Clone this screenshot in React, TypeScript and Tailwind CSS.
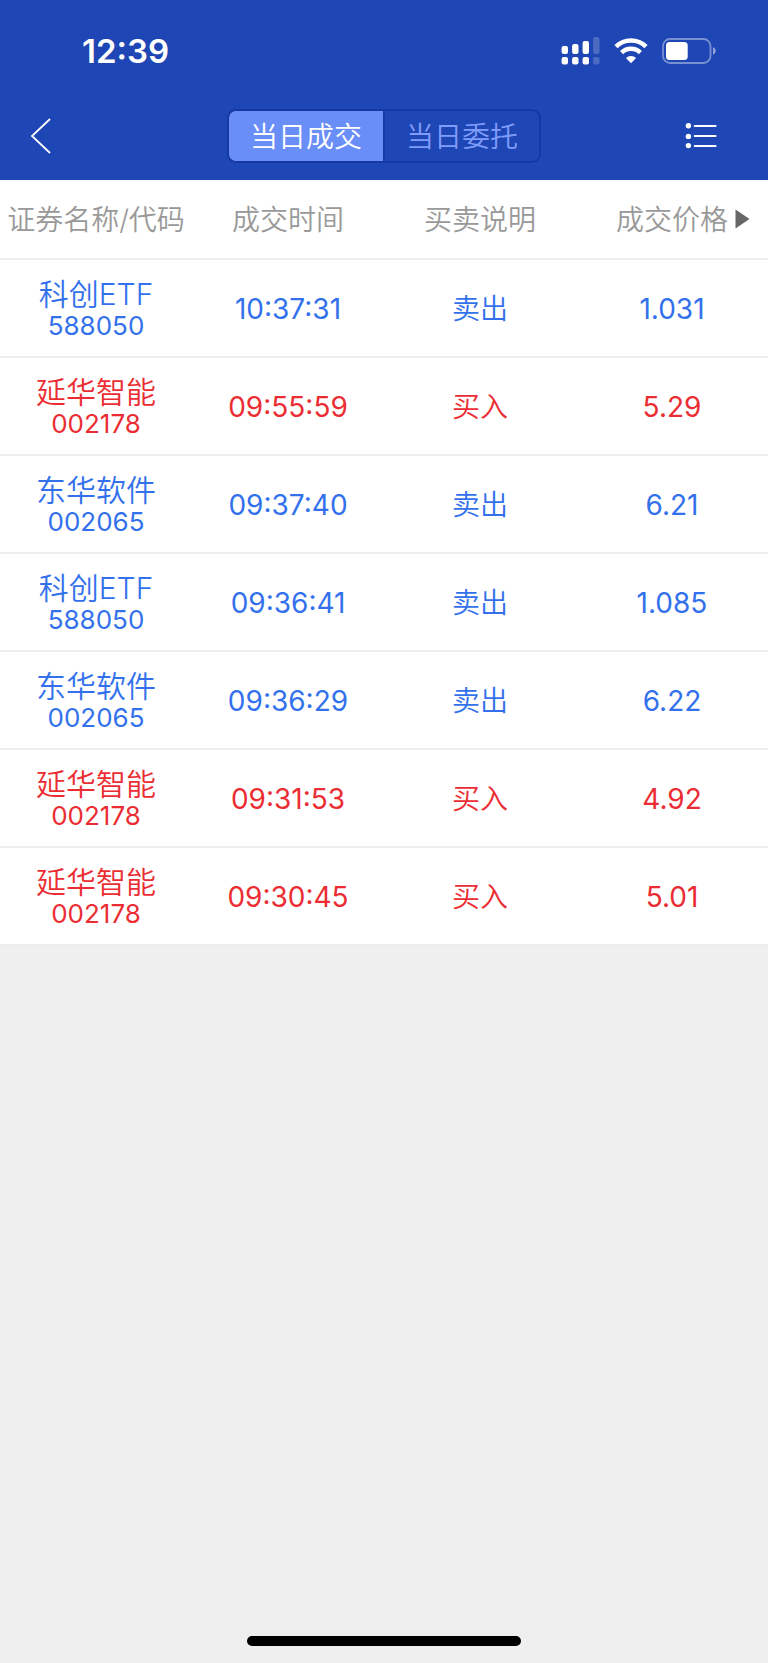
import { useState } from "react";
import clsx from "clsx";

type Side = "buy" | "sell";

interface Trade {
  name: string;
  code: string;
  time: string;
  side: Side;
  price: string;
}

const TRADES: Trade[] = [
  { name: "科创ETF", code: "588050", time: "10:37:31", side: "sell", price: "1.031" },
  { name: "延华智能", code: "002178", time: "09:55:59", side: "buy", price: "5.29" },
  { name: "东华软件", code: "002065", time: "09:37:40", side: "sell", price: "6.21" },
  { name: "科创ETF", code: "588050", time: "09:36:41", side: "sell", price: "1.085" },
  { name: "东华软件", code: "002065", time: "09:36:29", side: "sell", price: "6.22" },
  { name: "延华智能", code: "002178", time: "09:31:53", side: "buy", price: "4.92" },
  { name: "延华智能", code: "002178", time: "09:30:45", side: "buy", price: "5.01" },
];

const SIDE_LABEL: Record<Side, string> = { buy: "买入", sell: "卖出" };

const TABS = ["当日成交", "当日委托"];

function SignalIcon() {
  const tops = [9, 7, 4, 0];
  return (
    <svg width="39" height="28" viewBox="0 0 39 28" fill="white">
      {tops.map((top, i) => (
        <g key={i} opacity={i === 3 ? 0.2 : 1}>
          <rect x={0.6 + i * 10.5} y={top} width="6.4" height={17 - top} rx="2" />
          <rect x={0.6 + i * 10.5} y="20" width="6.4" height="7.6" rx="2" />
        </g>
      ))}
    </svg>
  );
}

function WifiIcon() {
  return (
    <svg width="34" height="26" viewBox="0 0 34 26" fill="none">
      <path d="M2 8.6A21.5 21.5 0 0 1 32 8.6" stroke="white" strokeWidth="4.6" />
      <path d="M7.6 14.6A13.4 13.4 0 0 1 26.4 14.6" stroke="white" strokeWidth="4.4" />
      <path d="M17 25.2L11.9 20A7.3 7.3 0 0 1 22.1 20Z" fill="white" />
    </svg>
  );
}

function BatteryIcon() {
  return (
    <svg width="54" height="26" viewBox="0 0 54 26" fill="none">
      <rect x="1" y="1" width="47.5" height="24" rx="7" stroke="white" strokeOpacity="0.4" strokeWidth="1.8" />
      <rect x="4" y="4" width="21.7" height="18" rx="3.5" fill="white" />
      <path d="M51 9.2a4 4 0 0 1 0 7.6Z" fill="white" fillOpacity="0.5" />
    </svg>
  );
}

function StatusBar() {
  return (
    <div className="flex h-24 items-center justify-between pr-[52px] pl-[82px] pt-1.5">
      <span className="text-[33px] leading-10 font-semibold">12:39</span>
      <div className="flex items-center gap-3.5">
        <SignalIcon />
        <WifiIcon />
        <BatteryIcon />
      </div>
    </div>
  );
}

function NavBar() {
  const [active, setActive] = useState(0);

  return (
    <div className="grid h-21 grid-cols-[1fr_auto_1fr] items-center pb-1">
      <button type="button" aria-label="返回" className="justify-self-start pl-[30px]">
        <svg width="22" height="38" viewBox="0 0 22 38" fill="none">
          <path d="M20 2L2 19L20 36" stroke="white" strokeWidth="1.8" />
        </svg>
      </button>

      <div className="flex h-[54px] w-[314px] overflow-hidden rounded-[9px] border-2 border-[#1538a2]">
        {TABS.map((tab, i) => (
          <button
            key={tab}
            type="button"
            aria-pressed={active === i}
            onClick={() => setActive(i)}
            className={clsx(
              "flex-1 pt-0.5 text-[28px] leading-10 font-[350]",
              i > 0 && "border-l-2 border-[#1538a2]",
              active === i ? "bg-[#698ef7] text-white" : "text-[#809cfb]",
            )}
          >
            {tab}
          </button>
        ))}
      </div>

      <button type="button" aria-label="菜单" className="justify-self-end pr-[50px]">
        <svg width="34" height="28" viewBox="0 0 34 28" fill="none">
          <g fill="white">
            <circle cx="4.4" cy="3.8" r="2.7" />
            <circle cx="4.4" cy="14.4" r="2.7" />
            <circle cx="4.4" cy="23.6" r="2.7" />
          </g>
          <path d="M10.8 4H31.5M10.8 14H31.5M10.8 24H31.5" stroke="white" strokeWidth="2.2" strokeLinecap="round" />
        </svg>
      </button>
    </div>
  );
}

function TradeRow({ trade }: { trade: Trade }) {
  return (
    <tr
      className={clsx(
        "h-[98px] border-b-2 border-[#ededed]",
        trade.side === "buy" ? "text-[#eb2d33]" : "text-[#3371ec]",
      )}
    >
      <td className="pt-1">
        <div className="text-[30px] leading-8">{trade.name}</div>
        <div className="text-[26px] leading-8 font-normal">{trade.code}</div>
      </td>
      <td className="pt-0.5 font-normal">{trade.time}</td>
      <td className="pt-0.5">{SIDE_LABEL[trade.side]}</td>
      <td className="pt-0.5 font-normal">{trade.price}</td>
    </tr>
  );
}

export default function App() {
  return (
    <div className="flex min-h-screen flex-col bg-[#efefef] font-['Inter','Noto_Sans_CJK_SC',sans-serif]">
      <header className="bg-[#1e46b4] text-white">
        <StatusBar />
        <NavBar />
      </header>

      <main className="flex-1">
        <table className="w-full table-fixed border-collapse bg-white text-center text-[28px] leading-8 font-[350]">
          <thead>
            <tr className="h-[79px] border-b-2 border-[#ededed] whitespace-nowrap text-[#999]">
              <th className="pt-0.5 font-[350]">证券名称/代码</th>
              <th className="pt-0.5 font-[350]">成交时间</th>
              <th className="pt-0.5 font-[350]">买卖说明</th>
              <th className="relative pt-0.5 font-[350]">
                成交价格
                <svg
                  className="absolute top-1/2 right-[18px] -translate-y-1/2"
                  width="15"
                  height="20"
                  viewBox="0 0 15 20"
                >
                  <path d="M0.5 0.5L14.5 10L0.5 19.5Z" fill="#666" />
                </svg>
              </th>
            </tr>
          </thead>
          <tbody>
            {TRADES.map((trade) => (
              <TradeRow key={trade.time} trade={trade} />
            ))}
          </tbody>
        </table>
      </main>

      <footer className="flex justify-center pb-[17px]">
        <div className="h-2.5 w-[274px] rounded-full bg-black" />
      </footer>
    </div>
  );
}
